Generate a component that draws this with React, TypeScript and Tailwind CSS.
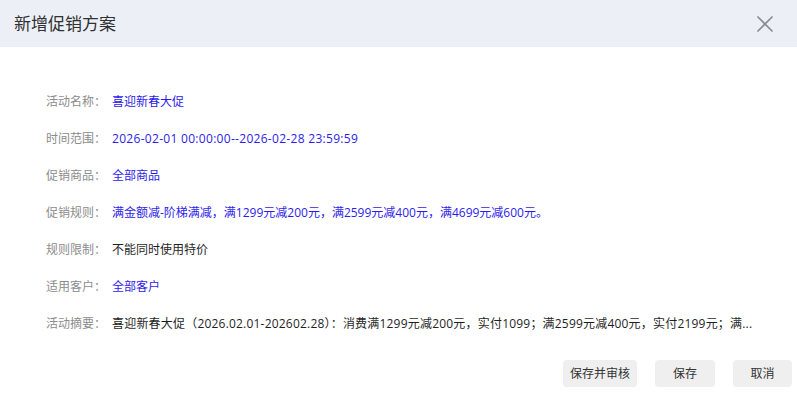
import { X } from "lucide-react"

const rows: { label: string; value: string; tone: "blue" | "dark"; track?: string }[] = [
  { label: "活动名称：", value: "喜迎新春大促", tone: "blue" },
  { label: "时间范围：", value: "2026-02-01 00:00:00--2026-02-28 23:59:59", tone: "blue", track: "tracking-[0.3px]" },
  { label: "促销商品：", value: "全部商品", tone: "blue" },
  { label: "促销规则：", value: "满金额减-阶梯满减，满1299元减200元，满2599元减400元，满4699元减600元。", tone: "blue" },
  { label: "规则限制：", value: "不能同时使用特价", tone: "dark" },
  { label: "适用客户：", value: "全部客户", tone: "blue" },
  {
    label: "活动摘要：",
    value: "喜迎新春大促（2026.02.01-202602.28）：消费满1299元减200元，实付1099；满2599元减400元，实付2199元；满...",
    tone: "dark",
    track: "tracking-[0.2px]",
  },
]

const App = () => {
  return (
    <div className="w-[797px] h-[399px] bg-white flex flex-col font-['Open_Sans','Noto_Sans_CJK_SC',sans-serif] overflow-hidden">
      <div className="h-[47px] shrink-0 bg-[#eceff6] flex items-center justify-between pl-[14px] pr-[18px]">
        <h2 className="text-[17px] text-[#303133] leading-none">新增促销方案</h2>
        <X size={28} className="text-[#8a8d93]" strokeWidth={1.5} />
      </div>

      <div className="flex flex-col pt-[36px] pl-[46px] pr-[20px]">
        {rows.map((r) => (
          <div key={r.label} className="h-[37px] flex items-center text-[12px]">
            <span className="w-[66px] shrink-0 text-[#8c8c8c]">{r.label}</span>
            <span
              className={`whitespace-nowrap ${r.track ?? ""} ${r.tone === "blue" ? "text-[#2d1ce8]" : "text-[#1f1f1f]"}`}
            >
              {r.value}
            </span>
          </div>
        ))}
      </div>

      <div className="flex justify-end gap-[18px] pr-[5px] mt-[18px]">
        <button className="h-[27px] w-[74px] rounded bg-[#efefef] text-[12px] text-[#333]">保存并审核</button>
        <button className="h-[27px] w-[60px] rounded bg-[#efefef] text-[12px] text-[#333]">保存</button>
        <button className="h-[27px] w-[59px] rounded bg-[#efefef] text-[12px] text-[#333]">取消</button>
      </div>
    </div>
  )
}

export default App
